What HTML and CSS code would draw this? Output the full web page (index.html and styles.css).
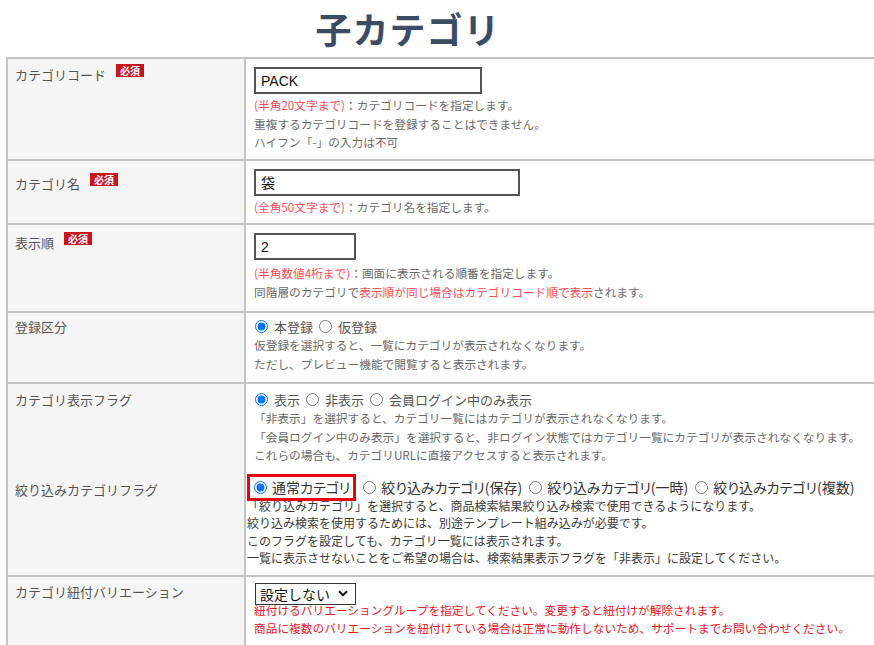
FILE: index.html
```html
<!DOCTYPE html>
<html lang="ja">
<head>
<meta charset="utf-8">
<title>子カテゴリ</title>
<link rel="stylesheet" href="styles.css">
</head>
<body>
<div class="page">
  <h1 class="title">子カテゴリ</h1>
  <table class="form">
    <tbody>
      <tr>
        <th><span class="label">カテゴリコード</span><span class="req">必須</span></th>
        <td>
          <input class="text w-code" type="text" value="PACK">
          <div class="note"><span class="red">(半角20文字まで)</span>：カテゴリコードを指定します。</div>
          <div class="note">重複するカテゴリコードを登録することはできません。</div>
          <div class="note">ハイフン「-」の入力は不可</div>
        </td>
      </tr>
      <tr class="r2">
        <th><span class="label">カテゴリ名</span><span class="req">必須</span></th>
        <td>
          <input class="text w-name" type="text" value="袋">
          <div class="note"><span class="red">(全角50文字まで)</span>：カテゴリ名を指定します。</div>
        </td>
      </tr>
      <tr class="r3">
        <th><span class="label">表示順</span><span class="req">必須</span></th>
        <td>
          <input class="text w-order" type="text" value="2">
          <div class="note"><span class="red">(半角数値4桁まで)</span>：画面に表示される順番を指定します。</div>
          <div class="note">同階層のカテゴリで<span class="red">表示順が同じ場合はカテゴリコード順で表示</span>されます。</div>
        </td>
      </tr>
      <tr class="radio-row r4">
        <th><span class="label">登録区分</span></th>
        <td>
          <div class="radios">
            <label class="opt"><input type="radio" name="reg" checked>本登録</label>
            <label class="opt"><input type="radio" name="reg">仮登録</label>
          </div>
          <div class="note">仮登録を選択すると、一覧にカテゴリが表示されなくなります。</div>
          <div class="note">ただし、プレビュー機能で閲覧すると表示されます。</div>
        </td>
      </tr>
      <tr class="radio-row joined">
        <th><span class="label">カテゴリ表示フラグ</span></th>
        <td>
          <div class="radios">
            <label class="opt"><input type="radio" name="disp" checked>表示</label>
            <label class="opt"><input type="radio" name="disp">非表示</label>
            <label class="opt"><input type="radio" name="disp">会員ログイン中のみ表示</label>
          </div>
          <div class="note">「非表示」を選択すると、カテゴリ一覧にはカテゴリが表示されなくなります。</div>
          <div class="note">「会員ログイン中のみ表示」を選択すると、非ログイン状態ではカテゴリ一覧にカテゴリが表示されなくなります。</div>
          <div class="note">これらの場合も、カテゴリURLに直接アクセスすると表示されます。</div>
        </td>
      </tr>
      <tr class="filter">
        <th><span class="label">絞り込みカテゴリフラグ</span></th>
        <td>
          <div class="radios big">
            <label class="opt boxed"><input type="radio" name="flt" checked>通常カテゴリ</label>
            <label class="opt"><input type="radio" name="flt">絞り込みカテゴリ(保存)</label>
            <label class="opt"><input type="radio" name="flt">絞り込みカテゴリ(一時)</label>
            <label class="opt"><input type="radio" name="flt">絞り込みカテゴリ(複数)</label>
          </div>
          <div class="note dark">「絞り込みカテゴリ」を選択すると、商品検索結果絞り込み検索で使用できるようになります。</div>
          <div class="note dark">絞り込み検索を使用するためには、別途テンプレート組み込みが必要です。</div>
          <div class="note dark">このフラグを設定しても、カテゴリ一覧には表示されます。</div>
          <div class="note dark">一覧に表示させないことをご希望の場合は、検索結果表示フラグを「非表示」に設定してください。</div>
        </td>
      </tr>
      <tr class="variation">
        <th><span class="label">カテゴリ紐付バリエーション</span></th>
        <td>
          <span class="select">
            <select>
              <option>設定しない</option>
            </select>
            <svg class="chev" width="10" height="7" viewBox="0 0 10 7"><path d="M1 1.2 L5 5.2 L9 1.2" fill="none" stroke="#111" stroke-width="2"/></svg>
          </span>
          <div class="note alert">紐付けるバリエーショングループを指定してください。変更すると紐付けが解除されます。</div>
          <div class="note alert">商品に複数のバリエーションを紐付けている場合は正常に動作しないため、サポートまでお問い合わせください。</div>
        </td>
      </tr>
    </tbody>
  </table>
</div>
</body>
</html>
```
FILE: styles.css
```css
html, body {
  margin: 0;
  padding: 0;
  background: #fff;
  overflow: hidden;
}
body {
  font-family: "Noto Sans CJK JP", "Noto Sans", sans-serif;
  color: #555;
}
.page {
  padding-left: 6px;
}
.title {
  margin: 0;
  width: 804px;
  height: 57px;
  line-height: 57px;
  text-align: center;
  font-size: 36px;
  font-weight: 700;
  color: #3c4c65;
  letter-spacing: 1px;
}
.form {
  border-collapse: collapse;
  table-layout: fixed;
  width: 920px;
}
.form th,
.form td {
  border: 2px solid #c4c4c4;
  vertical-align: top;
  text-align: left;
}
.form th {
  width: 222px;
  background: #f5f5f5;
  font-weight: 400;
  padding: 4px 7px;
  font-size: 13px;
  line-height: 22px;
  color: #555;
}
.form td {
  padding: 8px 8px 7px 8px;
  background: #fff;
}
.r2 th {
  padding-top: 11px;
}
.r3 th {
  padding-top: 6px;
}
.r3 td {
  padding-bottom: 10px;
}
.r3 .text {
  margin-bottom: 4px;
}
.radio-row th {
  padding-top: 2px;
}
.radio-row td {
  padding-top: 3px;
}
.r4 td {
  padding-bottom: 9px;
}
.joined th {
  padding-top: 4px;
}
.joined td {
  padding-top: 5px;
}
.joined th,
.joined td {
  border-bottom: none;
}
.filter th,
.filter td {
  border-top: none;
}
.label {
  vertical-align: middle;
}
.req {
  display: inline-block;
  margin-left: 10px;
  padding: 0 4px;
  height: 13px;
  line-height: 13px;
  font-size: 10px;
  font-weight: 700;
  color: #fff;
  background: #c8161d;
  vertical-align: 4px;
}
.text {
  display: block;
  box-sizing: border-box;
  height: 27px;
  margin: 0 0 2px;
  padding: 0 5px;
  border: 2px solid #555;
  border-radius: 0;
  font-family: "Liberation Sans", "Noto Sans CJK JP", sans-serif;
  font-size: 14px;
  color: #111;
  background: #fff;
}
.w-code { width: 228px; }
.w-name { width: 266px; }
.w-order { width: 102px; }
.note {
  font-size: 11.7px;
  line-height: 18.5px;
  color: #6a6a6a;
  white-space: nowrap;
}
.red {
  color: #ff4d58;
}
.radios {
  display: flex;
  align-items: center;
  height: 20px;
  font-size: 13px;
  color: #555;
  white-space: nowrap;
}
.opt {
  display: inline-flex;
  align-items: center;
  margin-right: 5px;
}
.opt input {
  margin: 0 6px 0 1px;
  width: 13px;
  height: 13px;
}
.filter th {
  padding-top: 6px;
}
.filter td {
  padding: 6px 4px 8px 1px;
}
.radios.big {
  height: 19px;
  font-size: 14px;
  color: #333;
  font-feature-settings: "palt";
}
.radios.big .opt {
  margin-right: 4px;
}
.radios.big .opt input {
  margin: 0 5px 0 3px;
}
.boxed {
  border: 3px solid #e60012;
  padding: 0 3px 0 1px;
  height: 21px;
  flex: none;
}
.note.dark {
  font-size: 12px;
  line-height: 17.5px;
  color: #3a3a3a;
}
.variation th {
  padding-top: 3px;
}
.variation td {
  padding-top: 6px;
}
.select {
  display: flex;
  align-items: center;
  box-sizing: border-box;
  width: 101px;
  height: 22px;
  border: 1px solid #333;
  background: #fff;
  margin-left: 1px;
  margin-bottom: -4px;
}
.select select {
  appearance: none;
  -webkit-appearance: none;
  border: none;
  background: transparent;
  padding: 0 0 0 4px;
  margin: 0;
  font-family: "Noto Sans CJK JP", sans-serif;
  font-size: 14px;
  color: #111;
  width: 82px;
  height: 20px;
  outline: none;
}
.chev {
  display: block;
}
.note.alert {
  color: #e8141e;
}
```
